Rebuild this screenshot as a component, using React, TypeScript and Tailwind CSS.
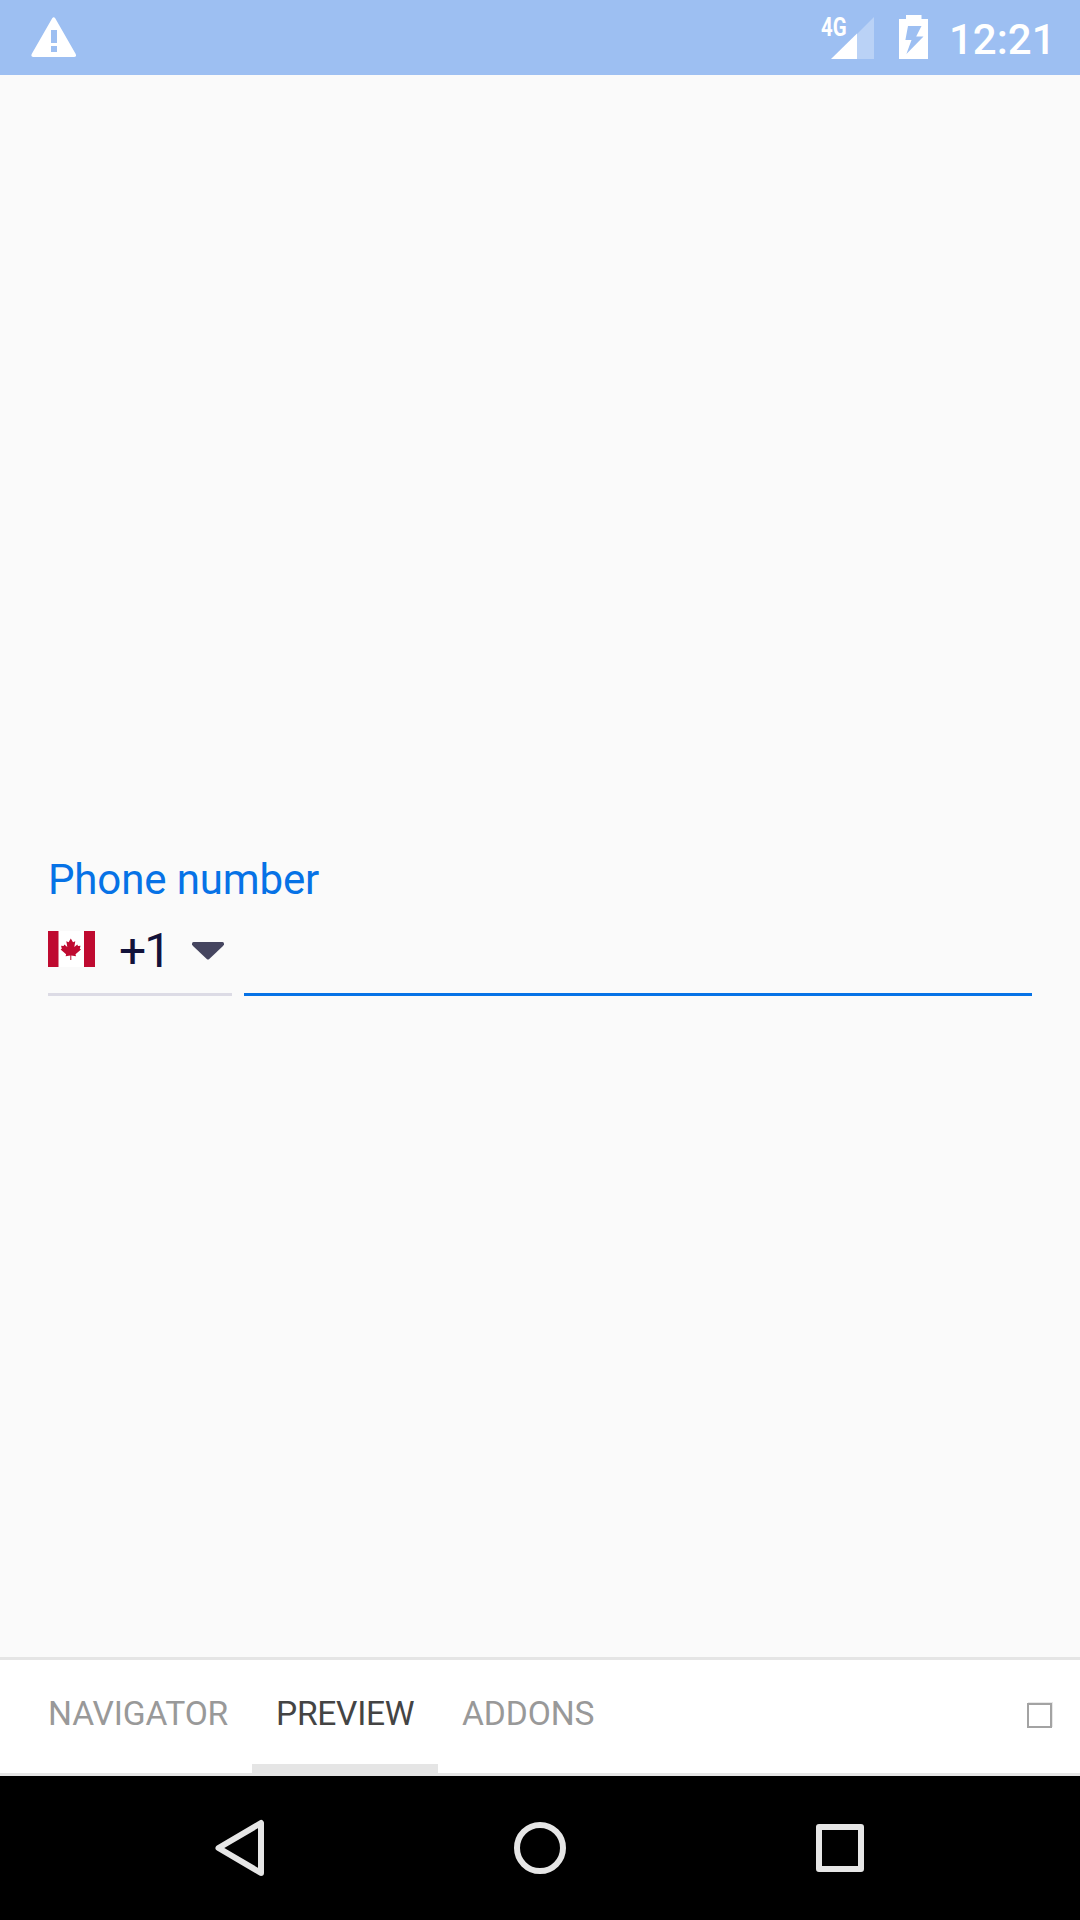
const tabs = [
  { label: "NAVIGATOR", width: "w-[228px]", tracking: "tracking-[-0.12px]", active: false },
  { label: "PREVIEW", width: "w-[186px]", tracking: "tracking-[-0.3px]", active: true },
  { label: "ADDONS", width: "w-[180px]", tracking: "tracking-[-0.1px]", active: false },
];

function StatusBar() {
  return (
    <header className="flex h-[75px] shrink-0 items-start bg-[#9dbff2] text-white">
      <svg className="mt-4 ml-[30px] h-[42px] w-12" viewBox="0 0 48 42" fill="currentColor">
        <path
          fillRule="evenodd"
          d="M22.2 2.3Q23.7 0 25.2 2.3L45.7 38Q46.9 41 44 41H3.6Q.5 41 1.7 38ZM21 14V27H27V14ZM21 30V36H27V30Z"
        />
      </svg>
      <span className="mt-[13px] ml-auto h-7 w-[26px] whitespace-nowrap">
        <span className="inline-block origin-left scale-x-[.8] text-[25.5px] leading-7 font-bold">4G</span>
      </span>
      <svg className="mt-[17px] -ml-4 h-[42px] w-[43px]" viewBox="0 0 43 42" fill="currentColor">
        <path d="M43 0V42H26V17Z" fillOpacity=".3" />
        <path d="M0 42L26 16.5V42Z" />
      </svg>
      <svg className="mt-[15px] ml-[25px] h-11 w-[29px]" viewBox="0 0 29 44" fill="currentColor">
        <path fillRule="evenodd" d="M7 0H22.5V4H29V44H0V4H7ZM9 11L6.4 25H12.5L7.4 39L24.5 21.5H17.2L22.5 11Z" />
      </svg>
      <time className="mt-[14px] mr-7 ml-[21px] w-[103px] text-left text-[42px] leading-[52px] font-medium whitespace-nowrap">
        12:21
      </time>
    </header>
  );
}

function CanadaFlag() {
  return (
    <svg className="h-9 w-[47px]" viewBox="0 0 47 36">
      <path fill="#fff" d="M0 0H47V36H0Z" />
      <path fill="#bf0a30" d="M0 0H10.5V36H0ZM36 0H47V36H36Z" />
      <path
        fill="#bf0a30"
        d="M22.8 7.5L25 11.3L27.3 10.2L26.3 16L29.3 13.5L30 15L32.5 14.8L31.8 17.8L33 18.6L27.5 23.2L28 25.2L23.3 24.6V29H22.3V24.6L17.6 25.2L18.1 23.2L12.6 18.6L13.8 17.8L13.1 14.8L15.6 15L16.3 13.5L19.3 16L18.3 10.2L20.6 11.3Z"
      />
    </svg>
  );
}

function PhoneField() {
  return (
    <section className="flex flex-col px-12 pt-[780px]">
      <label htmlFor="phone" className="text-[42px] leading-[50px] tracking-[-0.13px] text-[#0672e6]">
        Phone number
      </label>
      <div className="mt-[13px] flex gap-3">
        <button className="flex h-[78px] w-[184px] items-start border-b-[3px] border-[#dcdbe5]">
          <span className="mt-[13px]">
            <CanadaFlag />
          </span>
          <span className="mt-[7px] ml-6 w-[49px] text-left text-[48px] leading-[52px] tracking-[-2px] whitespace-nowrap text-[#12123a]">
            +1
          </span>
          <svg className="mt-6 ml-6 h-[18px] w-8" viewBox="0 0 32 18" fill="#45455f">
            <path d="M1.5 0H30.5Q32 0 32 1.5V2.5L31 4L17 17.2Q16 18 15 17.2L1 4L0 2.5V1.5Q0 0 1.5 0Z" />
          </svg>
        </button>
        <input id="phone" type="tel" className="h-[78px] flex-1 border-b-[3px] border-[#0672e6] outline-none" />
      </div>
    </section>
  );
}

function TabBar() {
  return (
    <nav className="flex h-[119px] shrink-0 items-stretch border-t-[3px] border-[#e5e5e5] bg-white pl-6 shadow-[inset_0_-3px_0_#e5e5e5]">
      {tabs.map((tab) => (
        <button
          key={tab.label}
          className={`${tab.width} ${tab.tracking} flex justify-start border-b-[12px] pt-8 pl-6 text-[33.6px] leading-[44px] whitespace-nowrap ${
            tab.active ? "border-[#e5e5e5] text-[#444444]" : "border-transparent text-[#999999]"
          }`}
        >
          {tab.label}
        </button>
      ))}
      <span className="mt-[43px] mr-7 ml-auto h-[25px] w-[25px] border-2 border-[#a3a3a3] shadow-[1px_-1px_0_#e8e8e8]" />
    </nav>
  );
}

function SystemNav() {
  return (
    <footer className="flex h-36 shrink-0 items-center justify-center gap-[200px] bg-black">
      <svg className="h-[100px] w-[100px]" viewBox="0 0 100 100" fill="none" stroke="#e6e6e6" strokeWidth="6" strokeLinejoin="round">
        <path d="M71 25V75L28.5 50Z" />
      </svg>
      <svg className="h-[100px] w-[100px]" viewBox="0 0 100 100" fill="none" stroke="#e6e6e6" strokeWidth="6">
        <circle cx="50" cy="50" r="23" />
      </svg>
      <svg className="h-[100px] w-[100px]" viewBox="0 0 100 100" fill="none" stroke="#e6e6e6" strokeWidth="6" strokeLinejoin="round">
        <path d="M29 29H71V71H29Z" />
      </svg>
    </footer>
  );
}

export default function App() {
  return (
    <div className="flex h-[1920px] w-[1080px] flex-col overflow-hidden bg-[#fafafa] font-['Roboto',sans-serif]">
      <StatusBar />
      <main className="flex-1">
        <PhoneField />
      </main>
      <TabBar />
      <SystemNav />
    </div>
  );
}
